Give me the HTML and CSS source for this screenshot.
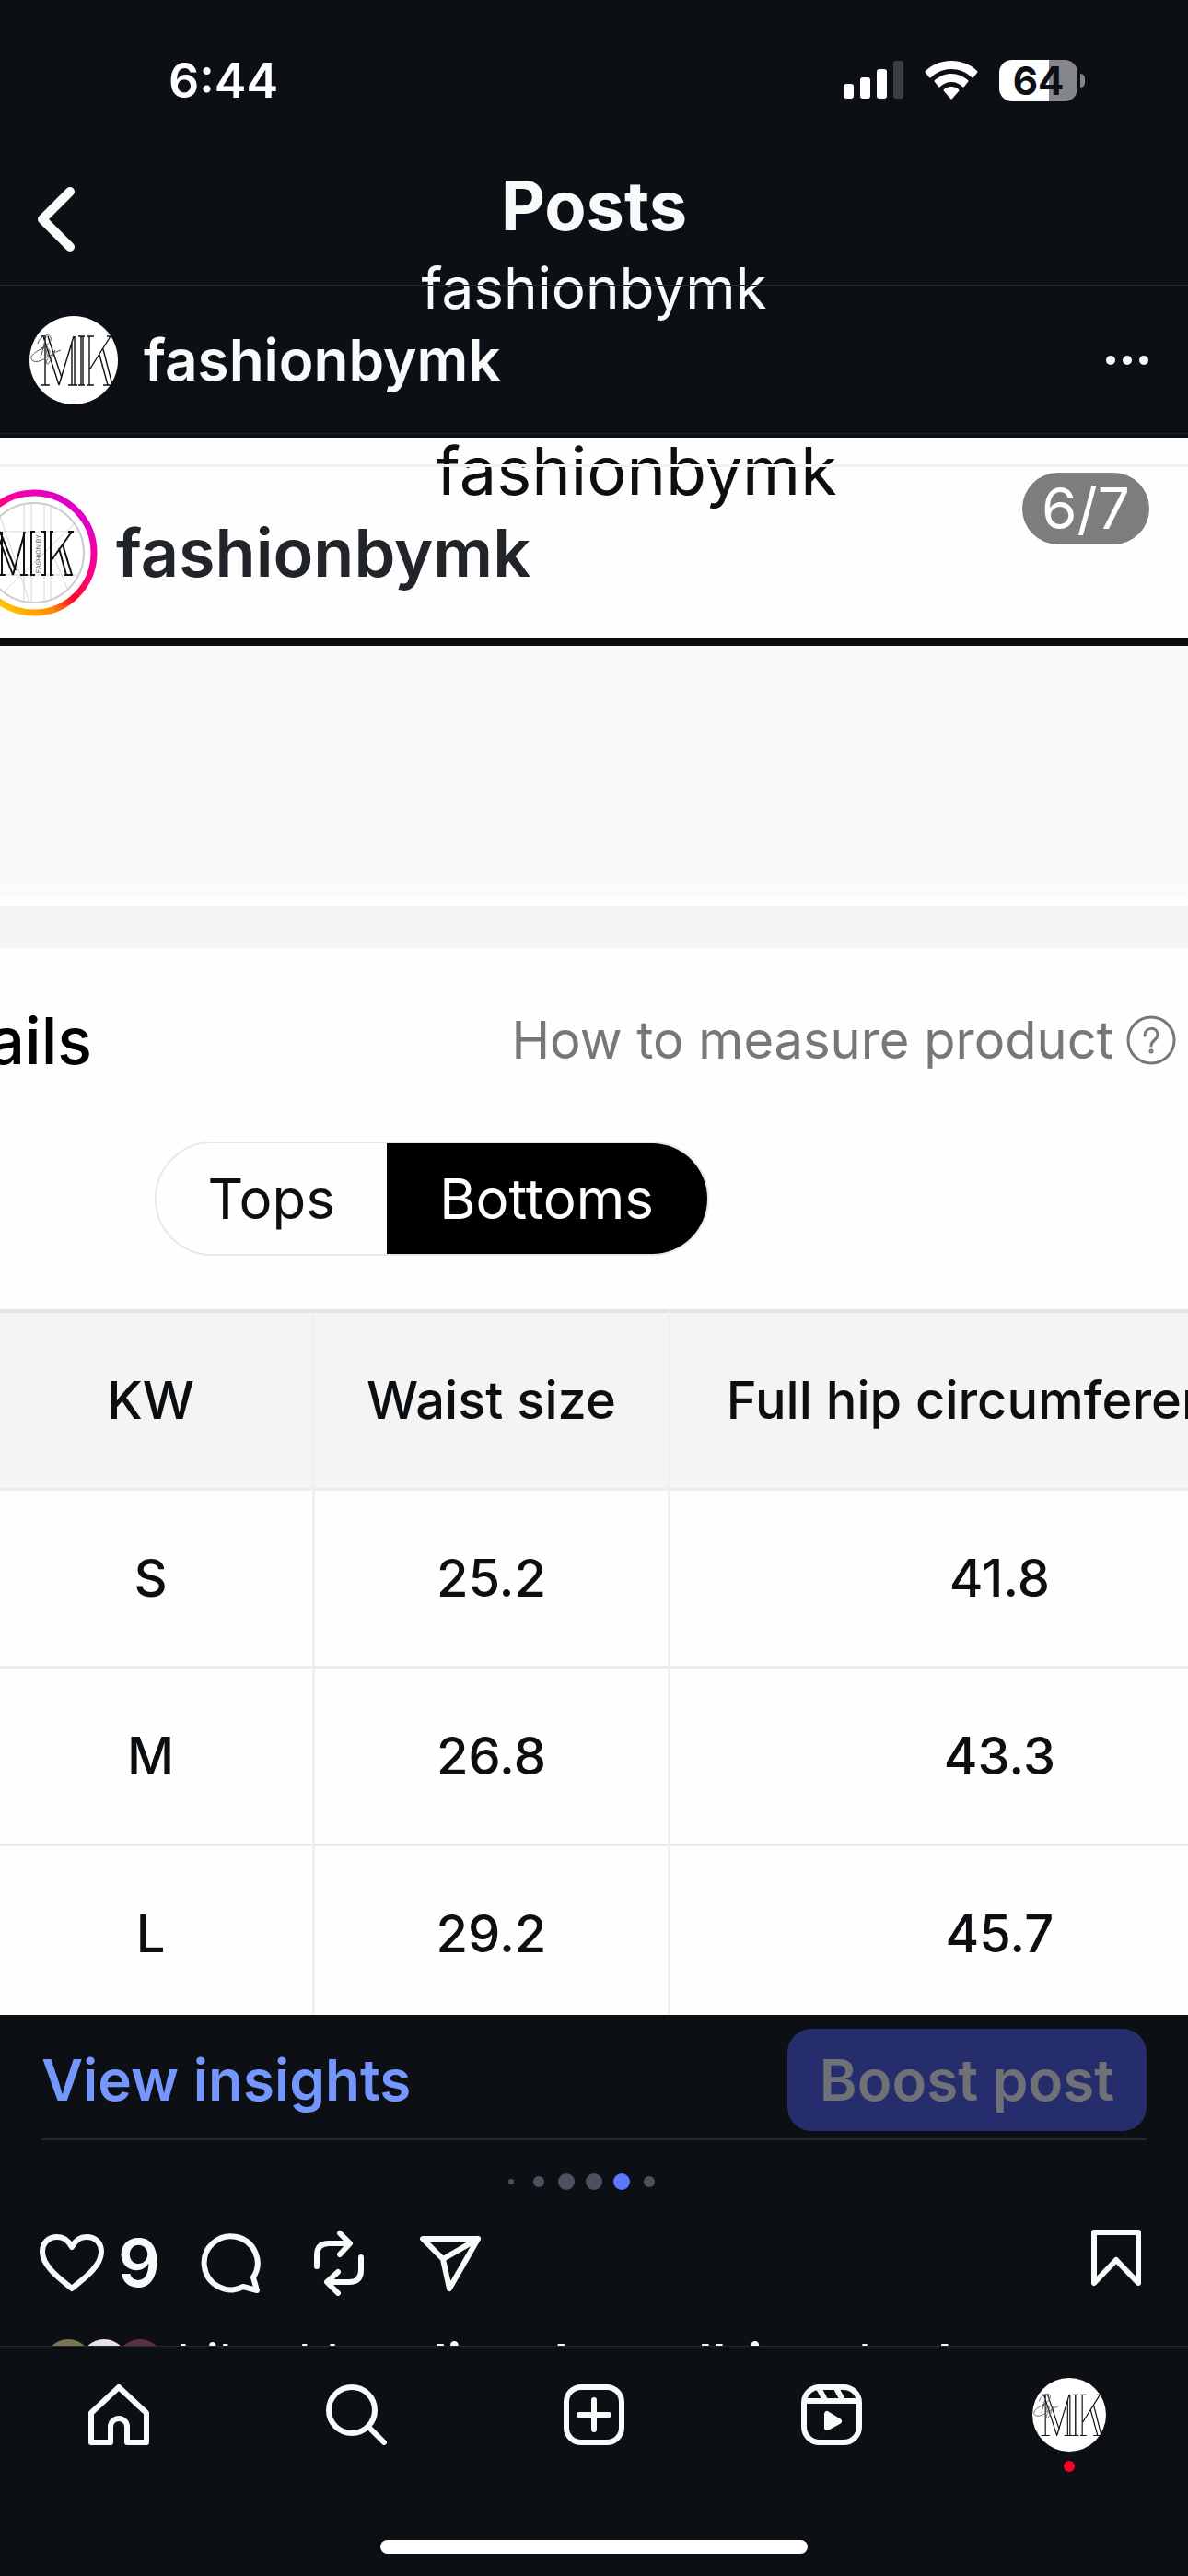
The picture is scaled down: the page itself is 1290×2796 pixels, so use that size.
FILE: index.html
```html
<!DOCTYPE html>
<html lang="en">
<head>
<meta charset="UTF-8">
<meta name="viewport" content="width=device-width, initial-scale=1.0">
<title>Posts - fashionbymk</title>
<link rel="stylesheet" href="styles.css">
</head>
<body>
  <!-- shared monogram, used in the post header and the tab bar -->
  <svg class="defs" width="0" height="0" aria-hidden="true">
    <symbol id="monogram" viewBox="0 0 96 96">
      <circle cx="48" cy="48" r="48" fill="#fff"/>
      <g fill="none" stroke="#111" stroke-width="1.4">
        <path d="M12 75h10M17 75V23M12 22h6M15 22L32 75M20 22L35 67M32 75L48 22M46 75V29M49 75V22M42 75h10"/>
        <path d="M53 22h7M53 75h7M56 22v53M58 22v53"/>
        <path d="M63 22h7M63 75h7M65 22v53M88 22L66 57M84 22h7M76 42L85 75M80 36L90 75M80 75h9"/>
      </g>
      <path d="M9 30c2-8 12-12 14-7s-6 11-11 12c8-2 12 2 9 7S7 52 3 48s4-10 12-13c5-1 3 8 5 9s6-5 8-7c-3 6-6 14-8 15s-3-4 2-8 8-6 12-7M12 46L18 22" fill="none" stroke="#555" stroke-width="1"/>
    </symbol>
  </svg>

  <header class="top">
    <div class="status-bar">
      <span class="time">6:44</span>
      <div class="status-icons">
        <svg class="signal" width="65" height="42" viewBox="0 0 65 42">
          <g fill="#fff">
            <rect x="0" y="25" width="11" height="16" rx="3"/>
            <rect x="18" y="18" width="11" height="23" rx="3"/>
            <rect x="36" y="9" width="11" height="32" rx="3"/>
          </g>
          <rect x="54" y="0" width="11" height="41" rx="3" fill="#3b3e42"/>
        </svg>
        <svg class="wifi" width="58" height="42" viewBox="0 0 58 42" fill="#fff">
          <path d="M29 0C18 0 8 4 1 11q-1 1 0 2l4 5q1 1 2 0C13 12 21 9 29 9s16 3 22 9q1 1 2 0l4-5q1-1 0-2C50 4 40 0 29 0z"/>
          <path d="M29 14c-7 0-13 3-18 7q-1 1 0 2l4 5q1 1 2 0c3-3 7-5 12-5s9 2 12 5q1 1 2 0l4-5q1-1 0-2c-5-4-11-7-18-7z"/>
          <path d="M29 28c-3 0-6 1-8 3q-1 1 0 2l7 8q1 1 2 0l7-8q1-1 0-2c-2-2-5-3-8-3z"/>
        </svg>
        <div class="battery"><span class="battery-level">64</span><i class="battery-tip"></i></div>
      </div>
    </div>
    <div class="nav-bar">
      <button class="back" aria-label="Back">
        <svg width="42" height="72" viewBox="0 0 42 72" fill="none" stroke="#f9fafa" stroke-width="10" stroke-linecap="round" stroke-linejoin="round"><path d="M36 6L6 36l30 30"/></svg>
      </button>
      <div class="nav-title">
        <h1>Posts</h1>
        <p>fashionbymk</p>
      </div>
    </div>
  </header>

  <main class="feed">
    <div class="post-head">
      <svg class="avatar" width="96" height="96"><use href="#monogram"/></svg>
      <a class="username" href="#">fashionbymk</a>
      <button class="more" aria-label="More options"><i></i><i></i><i></i></button>
    </div>

    <div class="photo">
      <span class="counter">6/7</span>
      <p class="shot-nav">fashionbymk</p>
      <div class="shot-head">
        <svg class="story" width="138" height="138" viewBox="0 0 138 138">
          <defs>
            <linearGradient id="ring" x1="0.15" y1="0.9" x2="0.8" y2="0.1">
              <stop offset="0" stop-color="#ffc800"/>
              <stop offset="0.25" stop-color="#ff8a00"/>
              <stop offset="0.42" stop-color="#ff0a2a"/>
              <stop offset="0.7" stop-color="#ff0090"/>
              <stop offset="1" stop-color="#e000c8"/>
            </linearGradient>
          </defs>
          <circle cx="69" cy="69" r="65" fill="#fff" stroke="url(#ring)" stroke-width="7"/>
          <g transform="translate(14 14)" fill="none">
            <circle cx="55" cy="55" r="54" stroke="#ccc" stroke-width="2"/>
            <path d="M44 2v106M52 1v108M66 2v106M73 4v102M18 15L50 108M98 24L22 98M74 54l18 42M10 32h94M10 79h94" stroke="#d6d6d6" stroke-width="1"/>
            <path d="M44 32v47M40 79h8M14 32l18 47M18 32l17 42M32 79L45 32M20 32v47M16 79h8" stroke="#111" stroke-width="2"/>
            <path d="M56 32h-4v47h4M63 32h4v47h-4" stroke="#111" stroke-width="2"/>
            <path d="M76 32h-3v47h3M92 32h6M96 32L74 63M82 50l8 29M86 46l10 33M88 79h9" stroke="#111" stroke-width="2"/>
            <text x="-77" y="62" transform="rotate(-90)" font-family="Liberation Sans, sans-serif" font-size="7" fill="#666">FASHION BY</text>
          </g>
        </svg>
        <span class="shot-name">fashionbymk</span>
      </div>
      <div class="shot-banner"></div>
      <div class="shot-strip"></div>

      <div class="size-head">
        <h2>Details</h2>
        <a class="measure" href="#">How to measure product
          <svg width="54" height="54" viewBox="0 0 54 54" fill="none" stroke="#777" stroke-width="3" stroke-linecap="round"><circle cx="27" cy="27" r="25"/><path d="M20 22c0-10 14-10 14-1 0 6-7 6-7 12"/><circle cx="27" cy="39" r="1"/></svg>
        </a>
      </div>
      <div class="toggle">
        <button>Tops</button>
        <button class="active">Bottoms</button>
      </div>
      <table class="sizes">
        <thead>
          <tr><th class="col-size">KW</th><th class="col-waist">Waist size</th><th>Full hip circumference</th></tr>
        </thead>
        <tbody>
          <tr><td>S</td><td>25.2</td><td>41.8</td></tr>
          <tr><td>M</td><td>26.8</td><td>43.3</td></tr>
          <tr><td>L</td><td>29.2</td><td>45.7</td></tr>
        </tbody>
      </table>
    </div>

    <div class="insights">
      <a href="#">View insights</a>
      <button class="boost" disabled>Boost post</button>
    </div>

    <div class="dots">
      <i class="tiny"></i><i class="small"></i><i></i><i></i><i class="current"></i><i class="small"></i>
    </div>

    <div class="actions">
      <button class="like" aria-label="Like">
        <svg width="72" height="72" viewBox="0 0 72 72"><path d="M36 64C30 58 4 42 4 24 4 14 11 8 20 8c7 0 12 3 16 11C40 11 45 8 52 8c9 0 16 6 16 16 0 18-26 34-32 40z"/></svg>
        <span>9</span>
      </button>
      <button aria-label="Comment">
        <svg width="72" height="72" viewBox="0 0 72 72"><path d="M62 52a29 29 0 1 0-11 10l15 4z"/></svg>
      </button>
      <button aria-label="Repost">
        <svg width="72" height="72" viewBox="0 0 72 72"><path d="M11 40V28q0-13 13-13h22M36 4l11 11-11 12M59 30v14q0 13-13 13H24M34 46L22 57l12 12"/></svg>
      </button>
      <button aria-label="Share">
        <svg width="72" height="72" viewBox="0 0 72 72"><path d="M6 10h60L35 64 28 32zM28 32L66 10"/></svg>
      </button>
      <button class="save" aria-label="Save">
        <svg width="60" height="72" viewBox="0 0 60 72"><path d="M6 3h48v55L30 33 6 58z"/></svg>
      </button>
    </div>

    <div class="liked">
      <div class="faces"><i class="face olive"></i><i class="face white"></i><i class="face plum"></i></div>
      <p>Liked by <b>alinashumallri</b> and <b>others</b></p>
    </div>
  </main>

  <footer class="bottom">
    <nav class="tabs">
      <a href="#" aria-label="Home">
        <svg width="66" height="66" viewBox="0 0 66 66"><path d="M33 3L3 31v32h21V46a9 9 0 0 1 18 0v17h21V31z"/></svg>
      </a>
      <a href="#" aria-label="Search">
        <svg width="66" height="66" viewBox="0 0 66 66"><circle cx="28" cy="28" r="25"/><path d="M46 46l17 17"/></svg>
      </a>
      <a href="#" aria-label="New post">
        <svg width="66" height="66" viewBox="0 0 66 66"><rect x="3" y="3" width="60" height="60" rx="16"/><path d="M33 17v32M17 33h32"/></svg>
      </a>
      <a href="#" aria-label="Reels">
        <svg width="66" height="66" viewBox="0 0 66 66"><rect x="3" y="3" width="60" height="60" rx="17"/><path d="M4 18h58M19 4l7 13M38 4l7 13"/><path class="solid" d="M28 32v15l13-7z"/></svg>
      </a>
      <a href="#" aria-label="Profile" class="profile">
        <svg width="80" height="80"><use href="#monogram"/></svg>
        <i class="badge"></i>
      </a>
    </nav>
    <div class="home-indicator"></div>
  </footer>
</body>
</html>
```
FILE: styles.css
```css
* {
  box-sizing: border-box;
}

body {
  margin: 0;
  height: 100vh;
  display: flex;
  flex-direction: column;
  overflow: hidden;
  background-color: #0c0f14;
  color: #f9fafa;
  font-family: Inter, "Liberation Sans", sans-serif;
}

h1, h2, p {
  margin: 0;
}

a {
  color: inherit;
  text-decoration: none;
}

button {
  padding: 0;
  border: none;
  background: none;
  color: inherit;
  font-family: inherit;
}

svg {
  display: block;
  flex: none;
}

i {
  display: block;
}

.defs {
  position: absolute;
}

/* status bar */
.status-bar {
  height: 174px;
  padding: 0 112px 0 183px;
  display: flex;
  align-items: center;
  justify-content: space-between;
}

.time {
  font-size: 52px;
  font-weight: 600;
  color: #fff;
}

.status-icons {
  display: flex;
  align-items: center;
  gap: 23px;
}

.battery {
  display: flex;
  align-items: center;
  gap: 3px;
}

.battery-level {
  width: 85px;
  height: 45px;
  border-radius: 14px;
  background: linear-gradient(to right, #fff 63%, #858688 63%);
  color: #0c0f14;
  font-size: 42px;
  font-weight: 700;
  line-height: 45px;
  text-align: center;
}

.battery-tip {
  width: 5px;
  height: 15px;
  border-radius: 0 5px 5px 0;
  background-color: #858688;
}

/* title bar, the subtitle runs over the line below it */
.nav-bar {
  height: 135px;
  padding: 4px 40px 0;
  display: grid;
  grid-template-columns: 1fr auto 1fr;
  align-items: start;
}

.back {
  height: 120px;
  justify-self: start;
}

.nav-title {
  text-align: center;
}

h1 {
  font-size: 74px;
  font-weight: 700;
  line-height: 90px;
}

.nav-title p {
  font-size: 62px;
  line-height: 90px;
}

.feed {
  flex: 1;
  min-height: 0;
  overflow: hidden;
}

.post-head {
  height: 162px;
  padding: 2px 43px 0 32px;
  display: flex;
  align-items: center;
  border-top: 1px solid #262a30;
  border-bottom: 1px solid #1e2227;
}

.username {
  margin-left: 28px;
  font-size: 62px;
  font-weight: 600;
  line-height: 80px;
}

.more {
  margin-left: auto;
  height: 90px;
  display: flex;
  align-items: center;
  gap: 8px;
}

.more i {
  width: 10px;
  height: 10px;
  border-radius: 50%;
  background-color: #f9fafa;
}

/* the picture in the post */
.photo {
  position: relative;
  margin-top: 4px;
  aspect-ratio: 1290 / 1712;
  overflow: hidden;
  background-color: #fefefe;
  color: #0c0f12;
}

.counter {
  position: absolute;
  top: 38px;
  right: 42px;
  width: 138px;
  height: 78px;
  border-radius: 39px;
  background-color: #7d7d7d;
  color: #fff;
  font-size: 62px;
  line-height: 78px;
  text-align: center;
}

.shot-nav {
  height: 29px;
  padding-left: 92px;
  font-size: 72px;
  line-height: 72px;
  text-align: center;
}

.shot-head {
  position: relative;
  height: 188px;
  display: flex;
  align-items: center;
  gap: 20px;
  border-top: 3px solid #f3f3f3;
}

.story {
  margin-left: -32px;
}

.shot-name {
  color: #212529;
  font-size: 72px;
  font-weight: 600;
}

.shot-banner {
  height: 291px;
  border-top: 9px solid #0a0c10;
  background: linear-gradient(#fafafa 94%, #fefefe 98%);
}

.shot-strip {
  height: 46px;
  background-color: #f4f4f4;
}

.size-head {
  height: 200px;
  padding-right: 13px;
  display: flex;
  align-items: center;
  justify-content: space-between;
}

.size-head h2 {
  width: 100px;
  display: flex;
  justify-content: flex-end;
  color: #000;
  font-size: 70px;
  font-weight: 500;
}

.measure {
  display: flex;
  align-items: center;
  gap: 14px;
  color: #777;
  font-size: 56px;
}

.toggle {
  width: 602px;
  height: 124px;
  margin: 10px 0 58px 13%;
  display: flex;
  overflow: hidden;
  border: 2px solid #e8e8e8;
  border-radius: 62px;
}

.toggle button {
  width: 250px;
  font-size: 60px;
}

.toggle .active {
  flex: 1;
  background-color: #000;
  color: #fff;
}

.sizes {
  width: 113%;
  margin-left: -12px;
  table-layout: fixed;
  border-spacing: 0;
  font-size: 56px;
  text-align: center;
}

.sizes th, .sizes td {
  height: 193px;
  padding: 0;
  border-right: 3px solid #efefef;
  border-bottom: 3px solid #ececec;
  font-weight: 500;
  white-space: nowrap;
}

.sizes th {
  height: 197px;
  border-top: 4px solid #e4e4e4;
  background-color: #f4f4f4;
}

.col-size {
  width: 354px;
}

.col-waist {
  width: 386px;
}

/* below the picture */
.insights {
  margin: 0 45px;
  padding: 15px 0 8px;
  display: flex;
  align-items: center;
  justify-content: space-between;
  border-bottom: 2px solid #25282d;
  color: #7596ff;
  font-size: 62px;
  font-weight: 600;
}

.boost {
  width: 390px;
  height: 111px;
  border-radius: 26px;
  background-color: #252d6d;
  color: #6f7176;
  font-size: 62px;
  font-weight: 600;
}

.dots {
  height: 90px;
  padding-right: 30px;
  display: grid;
  grid-template-columns: repeat(6, 30px);
  align-items: center;
  justify-content: center;
  justify-items: center;
}

.dots i {
  width: 18px;
  height: 18px;
  border-radius: 50%;
  background-color: #4b525e;
}

.dots .small {
  width: 12px;
  height: 12px;
}

.dots .tiny {
  width: 6px;
  height: 6px;
}

.dots .current {
  background-color: #5b78ff;
}

.actions {
  height: 86px;
  padding: 0 48px 0 42px;
  display: flex;
  align-items: center;
  gap: 48px;
}

.actions svg, .tabs svg {
  fill: none;
  stroke: #f9fafa;
  stroke-width: 6px;
  stroke-linecap: round;
  stroke-linejoin: round;
}

.like {
  width: 123px;
  display: flex;
  align-items: center;
  gap: 14px;
  font-size: 72px;
  font-weight: 600;
  line-height: 72px;
}

.save {
  margin-left: auto;
}

.liked {
  padding: 36px 48px 0;
  display: flex;
  align-items: center;
  gap: 26px;
  font-size: 58px;
  line-height: 60px;
  white-space: nowrap;
}

.liked b {
  font-weight: 600;
}

.faces {
  display: flex;
}

.face {
  width: 52px;
  height: 52px;
  margin-right: -13px;
  border-radius: 50%;
}

.olive {
  background-color: #7b7650;
}

.white {
  background-color: #e8e2e6;
}

.plum {
  background-color: #5a3045;
}

/* tab bar */
.bottom {
  height: 250px;
  border-top: 1px solid #262a30;
}

.tabs {
  height: 147px;
  display: grid;
  grid-template-columns: repeat(5, 1fr);
  align-items: center;
  justify-items: center;
}

.tabs .solid {
  fill: #f9fafa;
}

.tabs .profile {
  position: relative;
}

.tabs .profile svg {
  stroke: none;
}

.badge {
  position: absolute;
  top: 90px;
  left: 34px;
  width: 12px;
  height: 12px;
  border-radius: 50%;
  background-color: #ff0029;
}

.home-indicator {
  width: 36%;
  height: 15px;
  margin: 63px auto 0;
  border-radius: 8px;
  background-color: #fff;
}
```
